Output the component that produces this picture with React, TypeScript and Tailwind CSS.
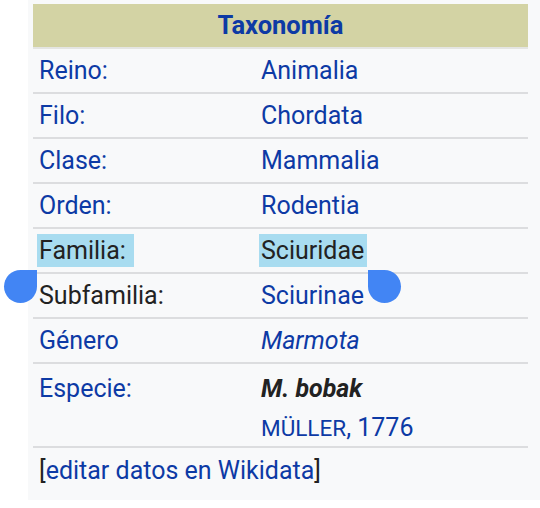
import React from "react";

const blue = "text-[#0d3aa5]";

function Row({ label, value }: { label: React.ReactNode; value: React.ReactNode }) {
  return (
    <div className="flex h-[45px] items-center border-b-2 border-[#dcdddf]">
      <div className="w-[228px] pl-[6px]">{label}</div>
      <div className="flex-1">{value}</div>
    </div>
  );
}

export default function App() {
  return (
    <div className="relative h-[508px] w-[540px] overflow-hidden bg-white" style={{ fontFamily: "Roboto, 'Noto Sans', sans-serif" }}>
      <div className="ml-[28px] h-[500px] bg-[#f8f9fa] pl-[5px] pr-[12px] pt-[4px] text-[25px] leading-none">
        <div className={`flex h-[45px] items-center justify-center border-b-2 border-[#e4e5e2] bg-[#d3d3a4] text-[25.5px] font-bold ${blue}`}>
          Taxonomía
        </div>
        <Row label={<span className={blue}>Reino:</span>} value={<span className={blue}>Animalia</span>} />
        <Row label={<span className={blue}>Filo:</span>} value={<span className={blue}>Chordata</span>} />
        <Row label={<span className={blue}>Clase:</span>} value={<span className={blue}>Mammalia</span>} />
        <Row label={<span className={blue}>Orden:</span>} value={<span className={blue}>Rodentia</span>} />
        <Row
          label={<span className="-ml-[2px] inline-block bg-[#a8dcf0] pl-[2px] pr-[8px] py-[4px] text-[#222]">Familia:</span>}
          value={<span className="-ml-[2px] inline-block bg-[#a8dcf0] pl-[2px] pr-[3px] py-[4px] text-[#222]">Sciuridae</span>}
        />
        <Row label={<span className="text-[#222]">Subfamilia:</span>} value={<span className={blue}>Sciurinae</span>} />
        <Row label={<span className={blue}>Género</span>} value={<span className={`italic ${blue}`}>Marmota</span>} />
        <div className="flex h-[84px] border-b-2 border-[#dcdddf]">
          <div className={`w-[228px] pl-[6px] pt-[12px] ${blue}`}>Especie:</div>
          <div className="flex-1 pt-[12px]">
            <div className="font-bold italic text-[#222]">M. bobak</div>
            <div className={`mt-[14px] ${blue}`}>
              <span className="text-[22.5px] uppercase">Müller</span>, 1776
            </div>
          </div>
        </div>
        <div className="pl-[6px] pt-[10px] text-[#222]">
          [<span className={blue}>editar datos en Wikidata</span>]
        </div>
      </div>
      <div className="absolute left-[4px] top-[270px] h-[33px] w-[33px] rounded-full rounded-tr-none bg-[#4285f4]" />
      <div className="absolute left-[368px] top-[270px] h-[33px] w-[33px] rounded-full rounded-tl-none bg-[#4285f4]" />
    </div>
  );
}
